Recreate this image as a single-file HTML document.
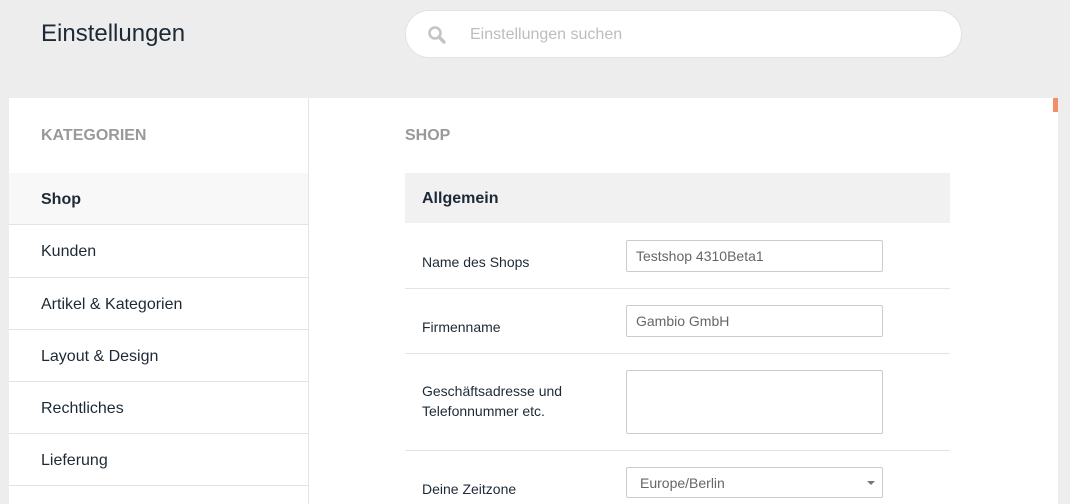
<!DOCTYPE html>
<html><head><style>
body{margin:0;width:1070px;height:504px;overflow:hidden;background:#ededed;font-family:"Liberation Sans",sans-serif;position:relative}
.abs{position:absolute}
h1{position:absolute;left:41px;top:20px;margin:0;font-weight:normal;font-size:24px;color:#1d2a36}
.search{left:405px;top:10px;width:555px;height:46px;background:#fff;border:1px solid #e2e2e2;border-radius:24px}
.search span{position:absolute;left:64px;top:15px;font-size:16px;color:#bdbdbd}
.panel{left:9px;top:98px;width:1049px;height:406px;background:#fff}
.side{left:9px;top:98px;width:299px;height:406px;border-right:1px solid #e3e3e3}
.cap{font-weight:bold;font-size:16px;color:#999}
.item{position:absolute;left:9px;width:299px;height:52px;border-bottom:1px solid #e3e3e3;font-size:16px;color:#1d2a36;line-height:54px;box-sizing:border-box;padding-left:32px}
.lbl{position:absolute;left:422px;font-size:14px;color:#1d2a36;line-height:20px}
.inp{position:absolute;left:626px;width:257px;height:30px;border:1px solid #ccc;border-radius:2px;box-sizing:border-box;font-size:14px;color:#666;padding:7px 9px}
.hr{position:absolute;left:405px;width:545px;height:1px;background:#e3e3e3}
</style></head><body>
<h1>Einstellungen</h1>
<div class="abs search">
<svg class="abs" style="left:21px;top:14px" width="20" height="20" viewBox="0 0 20 20"><circle cx="8" cy="8" r="5.5" fill="none" stroke="#c4c4c4" stroke-width="2.6"/><line x1="12" y1="12" x2="17" y2="17" stroke="#c4c4c4" stroke-width="3.4" stroke-linecap="round"/></svg>
<span>Einstellungen suchen</span></div>
<div class="abs panel"></div>
<div class="abs" style="left:1053px;top:98px;width:5px;height:14px;background:#f28f68"></div>
<div class="abs side"></div>
<div class="abs cap" style="left:41px;top:127px">KATEGORIEN</div>
<div class="abs cap" style="left:405px;top:127px">SHOP</div>
<div class="item" style="top:173px;background:#f8f8f8;font-weight:bold">Shop</div>
<div class="item" style="top:225px;height:53px">Kunden</div>
<div class="item" style="top:278px">Artikel &amp; Kategorien</div>
<div class="item" style="top:330px">Layout &amp; Design</div>
<div class="item" style="top:382px">Rechtliches</div>
<div class="item" style="top:434px">Lieferung</div>
<div class="abs" style="left:405px;top:173px;width:545px;height:50px;background:#f1f1f1;font-weight:bold;font-size:16px;color:#1d2a36;line-height:52px;box-sizing:border-box;padding-left:17px">Allgemein</div>
<div class="lbl" style="top:252px">Name des Shops</div>
<div class="inp" style="top:240px;height:32px">Testshop 4310Beta1</div>
<div class="hr" style="top:288px"></div>
<div class="lbl" style="top:317px">Firmenname</div>
<div class="inp" style="top:305px;height:32px">Gambio GmbH</div>
<div class="hr" style="top:353px"></div>
<div class="lbl" style="top:381px">Geschäftsadresse und<br>Telefonnummer etc.</div>
<div class="inp" style="top:370px;height:64px"></div>
<div class="hr" style="top:450px"></div>
<div class="lbl" style="top:479px">Deine Zeitzone</div>
<div class="inp" style="top:467px;height:31px;padding-left:13px">Europe/Berlin<span style="position:absolute;right:7px;top:13px;border:4px solid transparent;border-top:4px solid #777;border-bottom:0"></span></div>
</body></html>
